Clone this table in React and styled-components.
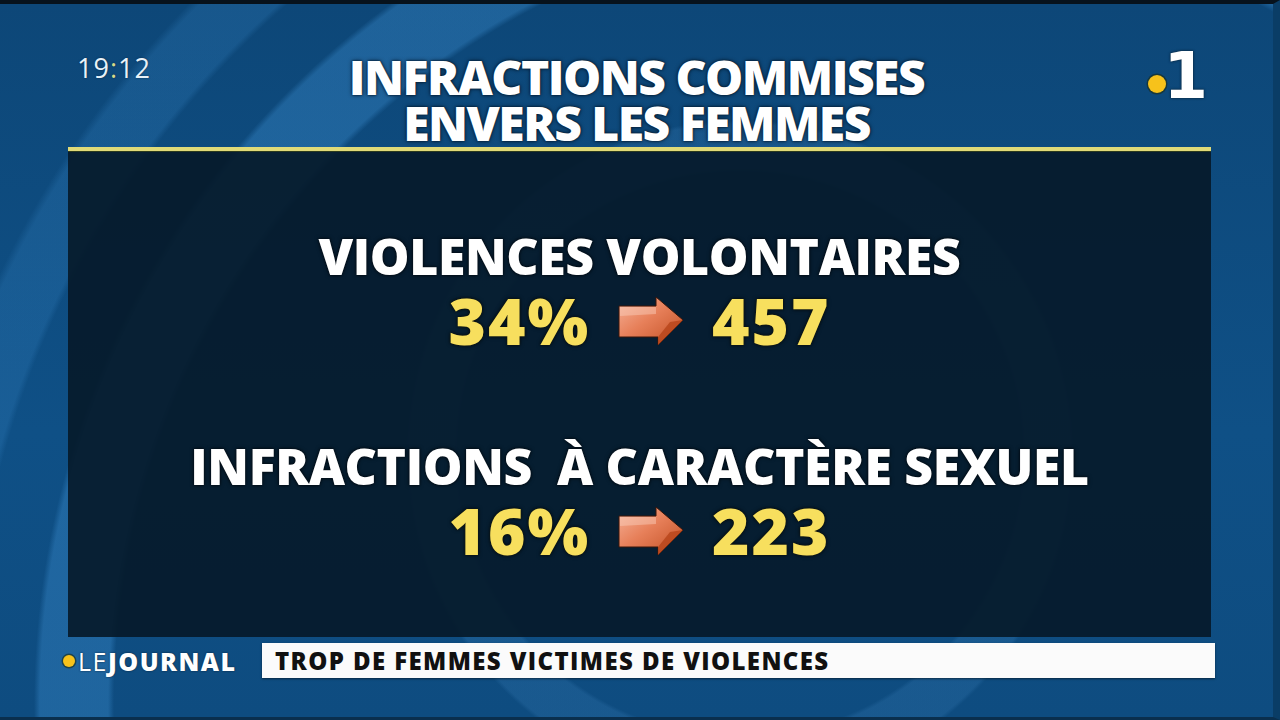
import styled, { createGlobalStyle } from "styled-components";

const stats = [
  { label: "VIOLENCES VOLONTAIRES", share: "34%", count: "457" },
  { label: "INFRACTIONS  À CARACTÈRE SEXUEL", share: "16%", count: "223" },
];

const GlobalStyle = createGlobalStyle`
  html, body { margin: 0; padding: 0; background: #000; }
  * { box-sizing: border-box; }
`;

const Screen = styled.div`
  width: 1280px;
  height: 720px;
  overflow: hidden;
  display: flex;
  flex-direction: column;
  font-family: "Open Sans", "DejaVu Sans", sans-serif;
  border-top: 4px solid #07121c;
  border-right: 7px solid #0a3d66;
  border-bottom: 3px solid #0a2f4e;
  background:
    radial-gradient(circle at 740px 450px, transparent 0 282px, rgba(70, 140, 200, 0.2) 286px 330px, transparent 334px),
    radial-gradient(circle at 900px 700px, transparent 0 786px, rgba(55, 135, 200, 0.42) 792px 860px, transparent 866px),
    radial-gradient(circle at 900px 700px, transparent 0 930px, rgba(55, 135, 200, 0.25) 936px 990px, transparent 998px),
    linear-gradient(180deg, #0d4778 0%, #0f5086 60%, #0e4c80 100%);
`;

const Header = styled.header`
  height: 143px;
  display: grid;
  grid-template-columns: 1fr auto 1fr;
  align-items: start;
`;

const Clock = styled.div`
  padding: 45px 0 0 77px;
  font-size: 27px;
  font-weight: 500;
  color: #e8f1f8;
  letter-spacing: 1px;
  text-shadow: 0 0 2px rgba(0, 20, 40, 0.6);

  span {
    color: #d6d98a;
  }
`;

const Title = styled.h1`
  margin: 0;
  padding-top: 50px;
  font-size: 48px;
  line-height: 46px;
  font-weight: 800;
  color: #fff;
  text-align: center;
  letter-spacing: -1.5px;
  text-shadow: 0 0 2px #061626, 0 0 4px rgba(3, 15, 28, 0.8);
`;

const Logo = styled.div`
  justify-self: end;
  padding: 40px 65px 0 0;
  display: flex;
  align-items: flex-start;
  font-family: "DejaVu Sans", sans-serif;
  font-size: 64px;
  line-height: 1;
  font-weight: 700;
  color: #fff;
  text-shadow: 0 0 2px #0a2a44, 0 0 3px #0a2a44;
`;

const Dot = styled.i`
  display: inline-block;
  flex: none;
  width: ${(p) => p.$size}px;
  height: ${(p) => p.$size}px;
  border-radius: 50%;
  background: #f7c21b;
  box-shadow: 0 0 0 1.5px rgba(30, 45, 20, 0.6);
  margin-top: ${(p) => p.$drop || 0}px;
  margin-right: ${(p) => p.$space || 0}px;
`;

const Panel = styled.section`
  margin-left: 68px;
  width: 1143px;
  height: 490px;
  border-top: 4px solid #e0da78;
  box-shadow: inset 0 1px 0 #2b3a1e;
  background: rgba(5, 24, 40, 0.9);
  display: flex;
  flex-direction: column;
  align-items: center;
  padding-top: 83px;
  gap: 98px;
`;

const Stat = styled.div`
  display: flex;
  flex-direction: column;
  align-items: center;
  gap: 18px;
`;

const Label = styled.h2`
  margin: 0;
  white-space: pre;
  font-size: 50px;
  line-height: 44px;
  font-weight: 800;
  letter-spacing: -0.4px;
  color: #fff;
  text-shadow: 0 0 2px #020a12, 0 0 4px rgba(0, 0, 0, 0.7);
`;

const Figures = styled.div`
  display: flex;
  align-items: center;
  gap: 28px;
  height: 50px;
`;

const Number = styled.span`
  font-size: 64px;
  line-height: 50px;
  font-weight: 800;
  letter-spacing: 2px;
  color: #f7df5e;
  text-shadow: 0 0 2px #1a1a08, 0 0 4px rgba(0, 0, 0, 0.8);
`;

const Arrow = () => (
  <svg width="66" height="50" viewBox="0 0 66 50">
    <defs>
      <linearGradient id="arrowFace" x1="0" y1="0" x2="1" y2="1">
        <stop offset="0" stopColor="#f6b39a" />
        <stop offset="0.45" stopColor="#e7805a" />
        <stop offset="1" stopColor="#c24e22" />
      </linearGradient>
    </defs>
    <path d="M1 10 L38 10 L38 1 L65 24 L40 49 L40 41 L1 41 Z" fill="url(#arrowFace)" stroke="#3a160a" strokeWidth="1" />
    <path d="M40 41 L40 49 L65 24 L52 26 Z" fill="#b9461c" opacity="0.85" />
    <path d="M2 11 L38 11 L38 18 L2 20 Z" fill="#fbd1bf" opacity="0.45" />
  </svg>
);

const Footer = styled.footer`
  margin-top: 6px;
  height: 35px;
  display: flex;
  align-items: center;
`;

const Brand = styled.div`
  width: 262px;
  padding-left: 63px;
  display: flex;
  align-items: center;
  font-size: 25px;
  color: #fff;
  letter-spacing: 1.5px;
  text-shadow: 0 0 2px rgba(0, 10, 20, 0.7);

  b {
    font-weight: 800;
  }
  span {
    font-weight: 400;
  }
`;

const Headline = styled.div`
  width: 953px;
  height: 35px;
  display: flex;
  align-items: center;
  padding-left: 13px;
  background: #fbfbfb;
  box-shadow: 0 1px 2px rgba(0, 0, 0, 0.5);
  font-size: 24px;
  font-weight: 800;
  letter-spacing: 1.4px;
  color: #111;
`;

export default function App() {
  return (
    <>
      <GlobalStyle />
      <Screen>
        <Header>
          <Clock>
            19<span>:</span>12
          </Clock>
          <Title>
            INFRACTIONS COMMISES
            <br />
            ENVERS LES FEMMES
          </Title>
          <Logo>
            <Dot $size={18} $drop={31} $space={-3} />1
          </Logo>
        </Header>
        <Panel>
          {stats.map((s) => (
            <Stat key={s.label}>
              <Label>{s.label}</Label>
              <Figures>
                <Number>{s.share}</Number>
                <Arrow />
                <Number>{s.count}</Number>
              </Figures>
            </Stat>
          ))}
        </Panel>
        <Footer>
          <Brand>
            <Dot $size={12} $space={3} />
            <span>LE</span>
            <b>JOURNAL</b>
          </Brand>
          <Headline>TROP DE FEMMES VICTIMES DE VIOLENCES</Headline>
        </Footer>
      </Screen>
    </>
  );
}
